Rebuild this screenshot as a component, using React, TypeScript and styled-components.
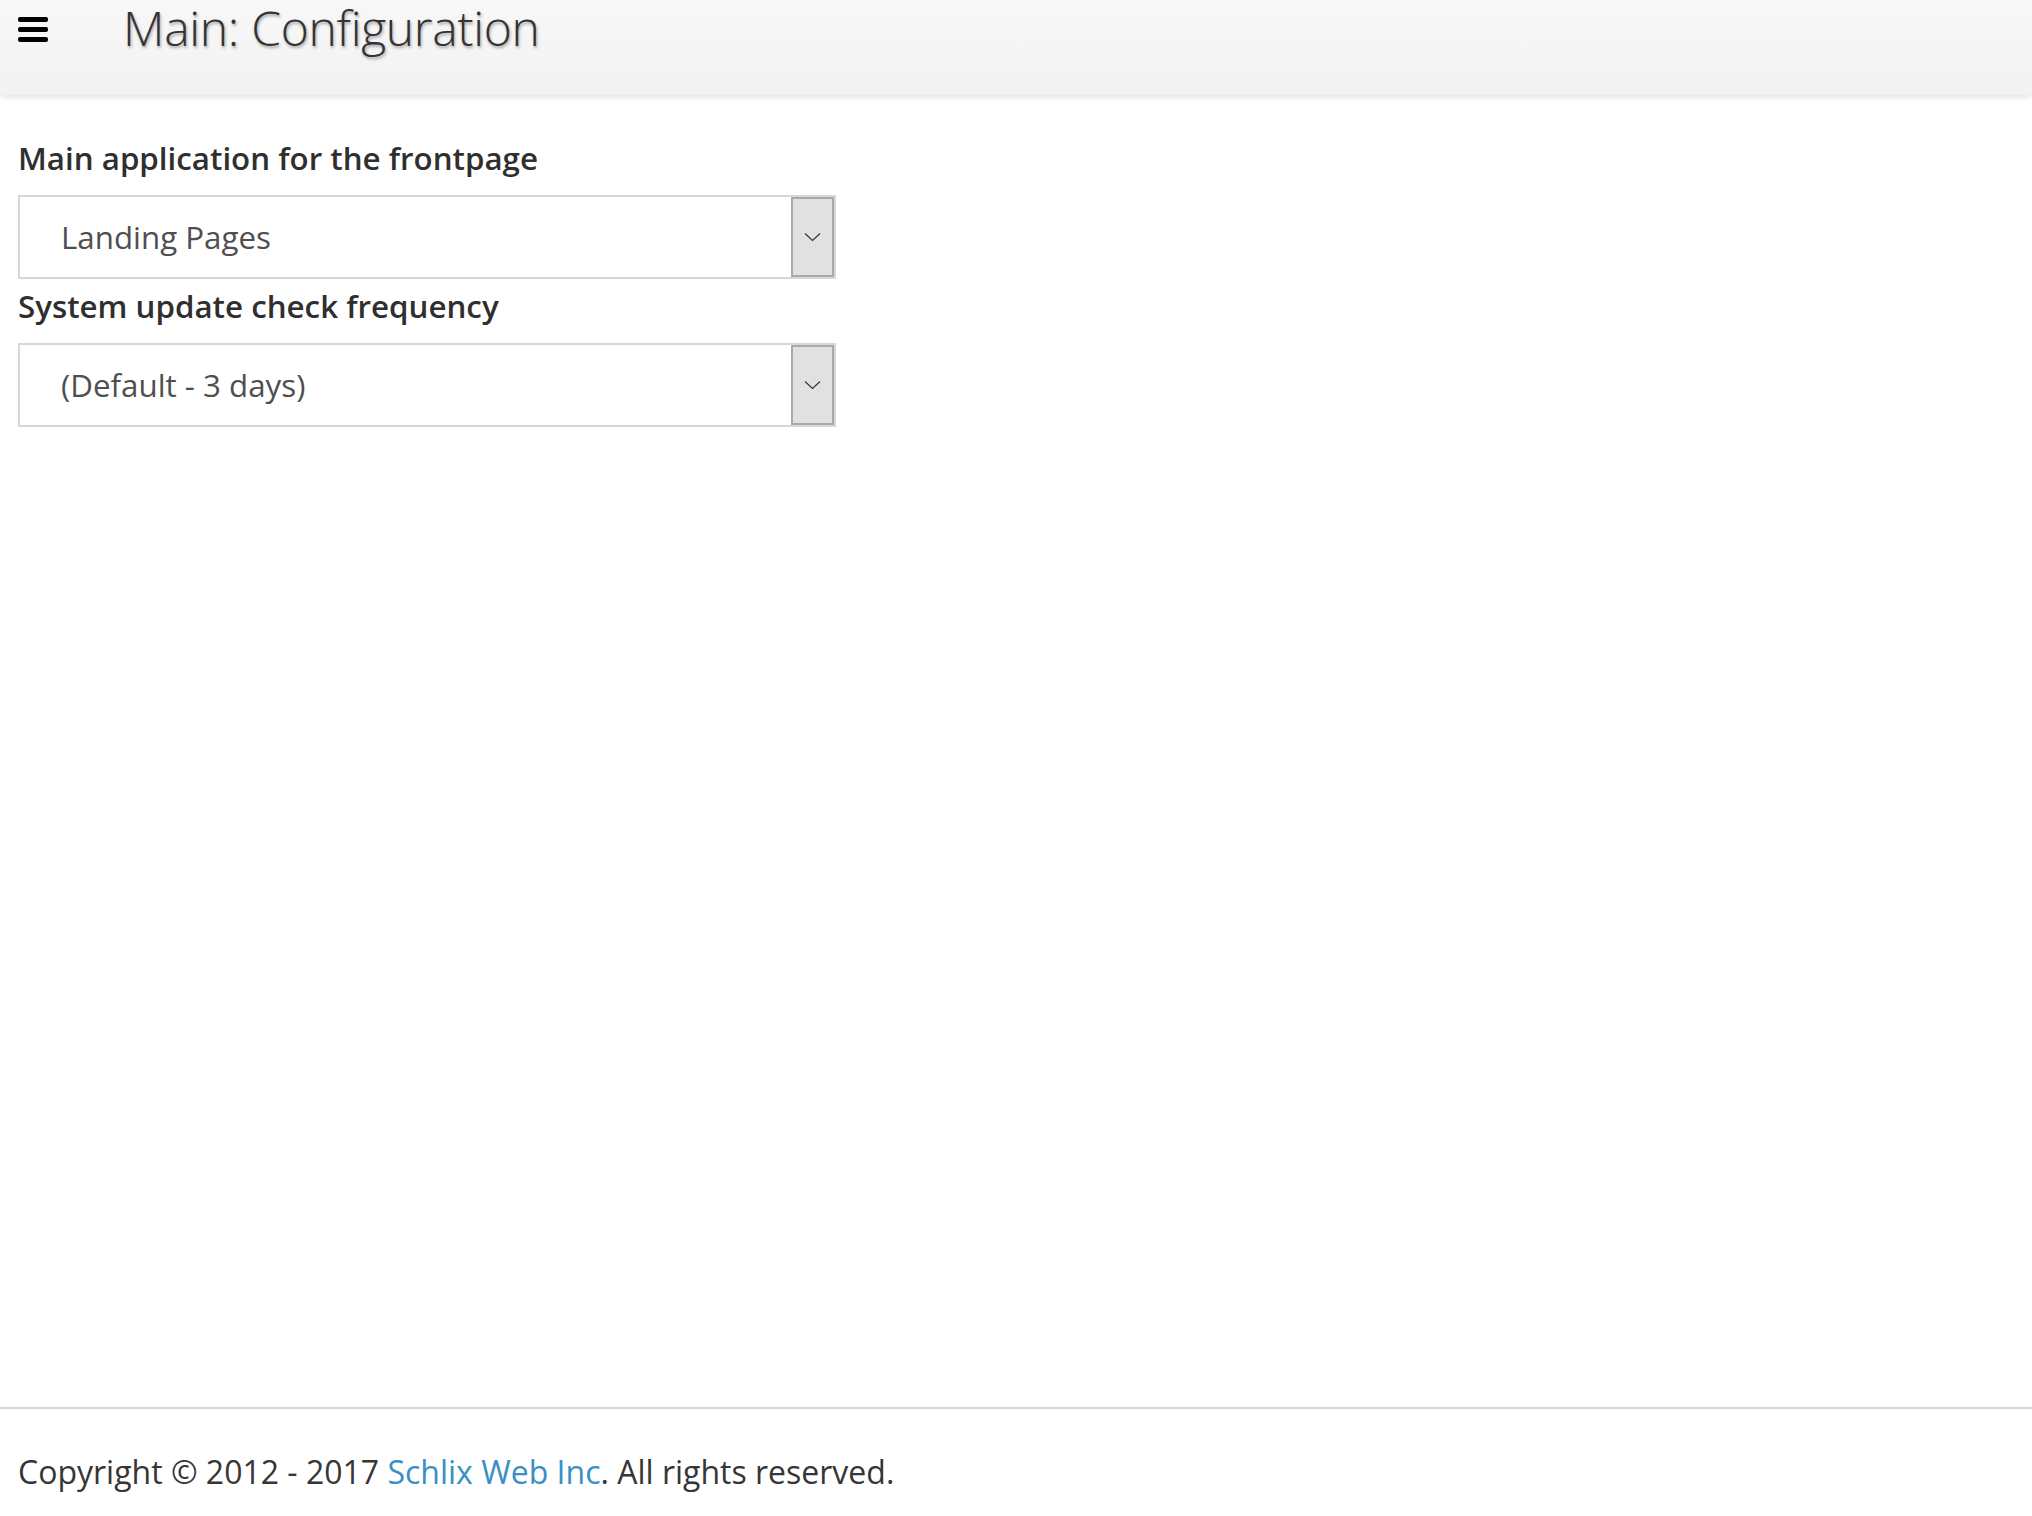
import React from "react";
import styled, { createGlobalStyle } from "styled-components";

const GlobalStyle = createGlobalStyle`
  html, body {
    margin: 0;
    padding: 0;
    background: #ffffff;
  }
  body {
    font-family: "Open Sans", "Noto Sans", "Liberation Sans", sans-serif;
    color: #333333;
  }
  * { box-sizing: border-box; }
`;

const Page = styled.div`
  min-height: 100vh;
  display: flex;
  flex-direction: column;
`;

const TopBar = styled.header`
  height: 95px;
  display: flex;
  align-items: flex-start;
  background: linear-gradient(to bottom, #f8f8f8 0%, #f2f2f2 100%);
  box-shadow: 0 2px 6px rgba(0, 0, 0, 0.12);
  position: relative;
  z-index: 1;
`;

const MenuButton = styled.button`
  margin: 17px 0 0 18px;
  padding: 0;
  width: 30px;
  height: 25px;
  border: 0;
  background: transparent;
  display: flex;
  flex-direction: column;
  justify-content: space-between;
  cursor: pointer;
`;

const MenuBar = styled.span`
  display: block;
  height: 5px;
  width: 100%;
  background: #000;
  border-radius: 2px;
`;

const Title = styled.h1`
  margin: 0 0 0 75px;
  font-family: "Open Sans", sans-serif;
  font-weight: 300;
  font-size: 48px;
  line-height: 56px;
  color: #333;
  text-shadow: 1px 2px 3px rgba(0, 0, 0, 0.35);
  letter-spacing: -0.3px;
`;

const Content = styled.main`
  flex: 1;
  padding: 38px 18px 0;
  display: flex;
  flex-direction: column;
  gap: 2px;
`;

const Field = styled.div`
  display: flex;
  flex-direction: column;
`;

const Label = styled.label`
  font-weight: 600;
  font-size: 31.3px;
  line-height: 50px;
  color: #2f2f2f;
  margin-bottom: 12px;
`;

const Select = styled.div`
  width: 818px;
  height: 84px;
  border: 2px solid #d3d7df;
  display: flex;
  align-items: stretch;
  background: #fff;
`;

const SelectValue = styled.div`
  flex: 1;
  display: flex;
  align-items: center;
  padding-left: 41px;
  font-size: 31.3px;
  color: #4f4f4f;
`;

const Caret = styled.div`
  width: 43px;
  background: #e1e1e1;
  border: 2px solid #a9a9a9;
  display: flex;
  align-items: center;
  justify-content: center;
`;

const Footer = styled.footer`
  border-top: 2px solid #d3d7df;
  padding: 43px 18px 24px;
  font-size: 32px;
  line-height: 40px;
  color: #363636;
`;

const Link = styled.a`
  color: #3a8fc4;
  text-decoration: none;
`;

const Chevron = () => (
  <svg width="17" height="10" viewBox="0 0 17 10" fill="none">
    <path d="M1 1.5 L8.5 8.5 L16 1.5" stroke="#333" strokeWidth="1.2" />
  </svg>
);

const fields = [
  { label: "Main application for the frontpage", value: "Landing Pages" },
  { label: "System update check frequency", value: "(Default - 3 days)" },
];

export default function App() {
  return (
    <Page>
      <GlobalStyle />
      <TopBar>
        <MenuButton aria-label="Menu">
          <MenuBar />
          <MenuBar />
          <MenuBar />
        </MenuButton>
        <Title>Main: Configuration</Title>
      </TopBar>
      <Content>
        {fields.map((f) => (
          <Field key={f.label}>
            <Label>{f.label}</Label>
            <Select>
              <SelectValue>{f.value}</SelectValue>
              <Caret>
                <Chevron />
              </Caret>
            </Select>
          </Field>
        ))}
      </Content>
      <Footer>
        Copyright © 2012 - 2017 <Link href="#">Schlix Web Inc</Link>. All rights reserved.
      </Footer>
    </Page>
  );
}
